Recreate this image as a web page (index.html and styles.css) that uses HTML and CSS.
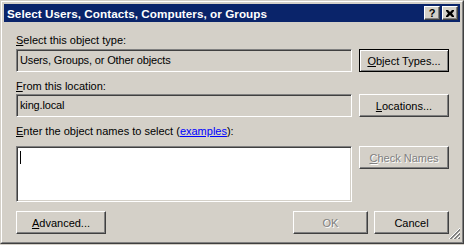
FILE: index.html
```
<!DOCTYPE html>
<html>
<head>
<meta charset="utf-8">
<link rel="stylesheet" href="styles.css">
</head>
<body>
<div class="window">
  <div class="frame">
    <div class="titlebar">
      <span class="title">Select Users, Contacts, Computers, or Groups</span>
      <div class="title-buttons">
        <span class="tbtn help">?</span>
        <span class="tbtn close">
          <svg width="8" height="7" viewBox="0 0 8 7"><path d="M0 0h2l2 2 2-2h2v1l-2 2.5 2 2.5v1h-2l-2-2-2 2h-2v-1l2-2.5-2-2.5z" fill="#000"/></svg>
        </span>
      </div>
    </div>
    <div class="content">
      <div class="label l1"><u>S</u>elect this object type:</div>
      <div class="row r1">
        <div class="field">Users, Groups, or Other objects</div>
        <div class="btn default"><u>O</u>bject Types...</div>
      </div>
      <div class="label l2"><u>F</u>rom this location:</div>
      <div class="row r2">
        <div class="field">king.local</div>
        <div class="btn"><u>L</u>ocations...</div>
      </div>
      <div class="label l3"><u>E</u>nter the object names to select (<span class="link">examples</span>):</div>
      <div class="row r3">
        <div class="textarea"><span class="caret"></span></div>
        <div class="btn disabled"><u>C</u>heck Names</div>
      </div>
      <div class="row r4">
        <div class="btn adv"><u>A</u>dvanced...</div>
        <div class="spacer"></div>
        <div class="btn ok disabled">OK</div>
        <div class="btn cancel">Cancel</div>
      </div>
    </div>
    <svg class="grip" width="12" height="12" viewBox="0 0 12 12">
      <g stroke-width="1" shape-rendering="crispEdges">
        <line x1="11.5" y1="0.5" x2="0.5" y2="11.5" stroke="#fff"/>
        <line x1="11.5" y1="1.5" x2="1.5" y2="11.5" stroke="#808080"/>
        <line x1="11.5" y1="2.5" x2="2.5" y2="11.5" stroke="#808080"/>
        <line x1="11.5" y1="4.5" x2="4.5" y2="11.5" stroke="#fff"/>
        <line x1="11.5" y1="5.5" x2="5.5" y2="11.5" stroke="#808080"/>
        <line x1="11.5" y1="6.5" x2="6.5" y2="11.5" stroke="#808080"/>
        <line x1="11.5" y1="8.5" x2="8.5" y2="11.5" stroke="#fff"/>
        <line x1="11.5" y1="9.5" x2="9.5" y2="11.5" stroke="#808080"/>
        <line x1="11.5" y1="10.5" x2="10.5" y2="11.5" stroke="#808080"/>
      </g>
    </svg>
  </div>
</div>
</body>
</html>
```
FILE: styles.css
```
html, body {
  margin: 0;
  padding: 0;
  background: #D4D0C8;
}
body {
  font-family: "Liberation Sans", Arial, sans-serif;
  font-size: 11px;
  color: #000;
}
.window {
  width: 464px;
  height: 244px;
  box-sizing: border-box;
  border: 1px solid;
  border-color: #D4D0C8 #404040 #404040 #D4D0C8;
  background: #D4D0C8;
}
.frame {
  position: relative;
  height: 100%;
  box-sizing: border-box;
  border: 1px solid;
  border-color: #fff #808080 #808080 #fff;
  padding: 2px;
}
.titlebar {
  height: 18px;
  background: #0A246A;
  display: flex;
  align-items: center;
  justify-content: space-between;
  padding: 0 2px 0 3px;
}
.title {
  color: #fff;
  font-weight: bold;
  font-size: 11.7px;
  letter-spacing: 0.05px;
  padding-top: 1px;
}
.title-buttons {
  display: flex;
  gap: 2px;
}
.tbtn {
  width: 16px;
  height: 14px;
  box-sizing: border-box;
  background: #D4D0C8;
  border: 1px solid;
  border-color: #fff #404040 #404040 #fff;
  box-shadow: inset -1px -1px #808080;
  display: flex;
  align-items: center;
  justify-content: center;
  font-weight: bold;
  font-size: 11px;
  line-height: 12px;
}
.tbtn.close svg {
  display: block;
  margin-left: -1px;
}
.content {
  padding: 12px 0 0 12px;
}
.label {
  height: 13px;
  line-height: 13px;
  white-space: nowrap;
}
.l2, .l3 {
  margin-top: 8px;
}
.link {
  color: #0000FF;
  text-decoration: underline;
}
.row {
  display: flex;
  gap: 7px;
}
.r1 { margin-top: 2px; }
.r2 { margin-top: 1px; }
.r3 { margin-top: 8px; align-items: flex-start; }
.r4 { margin-top: 9px; gap: 0; width: 433px; }
.field {
  width: 336px;
  height: 23px;
  box-sizing: border-box;
  border: 1px solid;
  border-color: #808080 #fff #fff #808080;
  box-shadow: inset 1px 1px #404040, inset -1px -1px #D4D0C8;
  padding: 0 3px;
  line-height: 21px;
  white-space: nowrap;
  letter-spacing: -0.15px;
}
.textarea {
  width: 336px;
  height: 56px;
  box-sizing: border-box;
  border: 1px solid;
  border-color: #808080 #fff #fff #808080;
  box-shadow: inset 1px 1px #404040, inset -1px -1px #D4D0C8;
  background: #fff;
  padding: 4px 3px;
}
.caret {
  display: block;
  width: 1px;
  height: 13px;
  background: #000;
}
.btn {
  width: 90px;
  height: 23px;
  box-sizing: border-box;
  border: 1px solid;
  border-color: #fff #404040 #404040 #fff;
  box-shadow: inset -1px -1px #808080;
  display: flex;
  align-items: center;
  justify-content: center;
  white-space: nowrap;
}
.btn.default {
  border-color: #000;
  box-shadow: inset 1px 1px #fff, inset -1px -1px #808080;
}
.btn.disabled {
  color: #808080;
  text-shadow: 1px 1px 0 #fff;
}
.spacer { flex: 1; }
.btn.ok { width: 75px; }
.btn.cancel { width: 75px; margin-left: 6px; }
.grip {
  position: absolute;
  right: 2px;
  bottom: 2px;
}
```
